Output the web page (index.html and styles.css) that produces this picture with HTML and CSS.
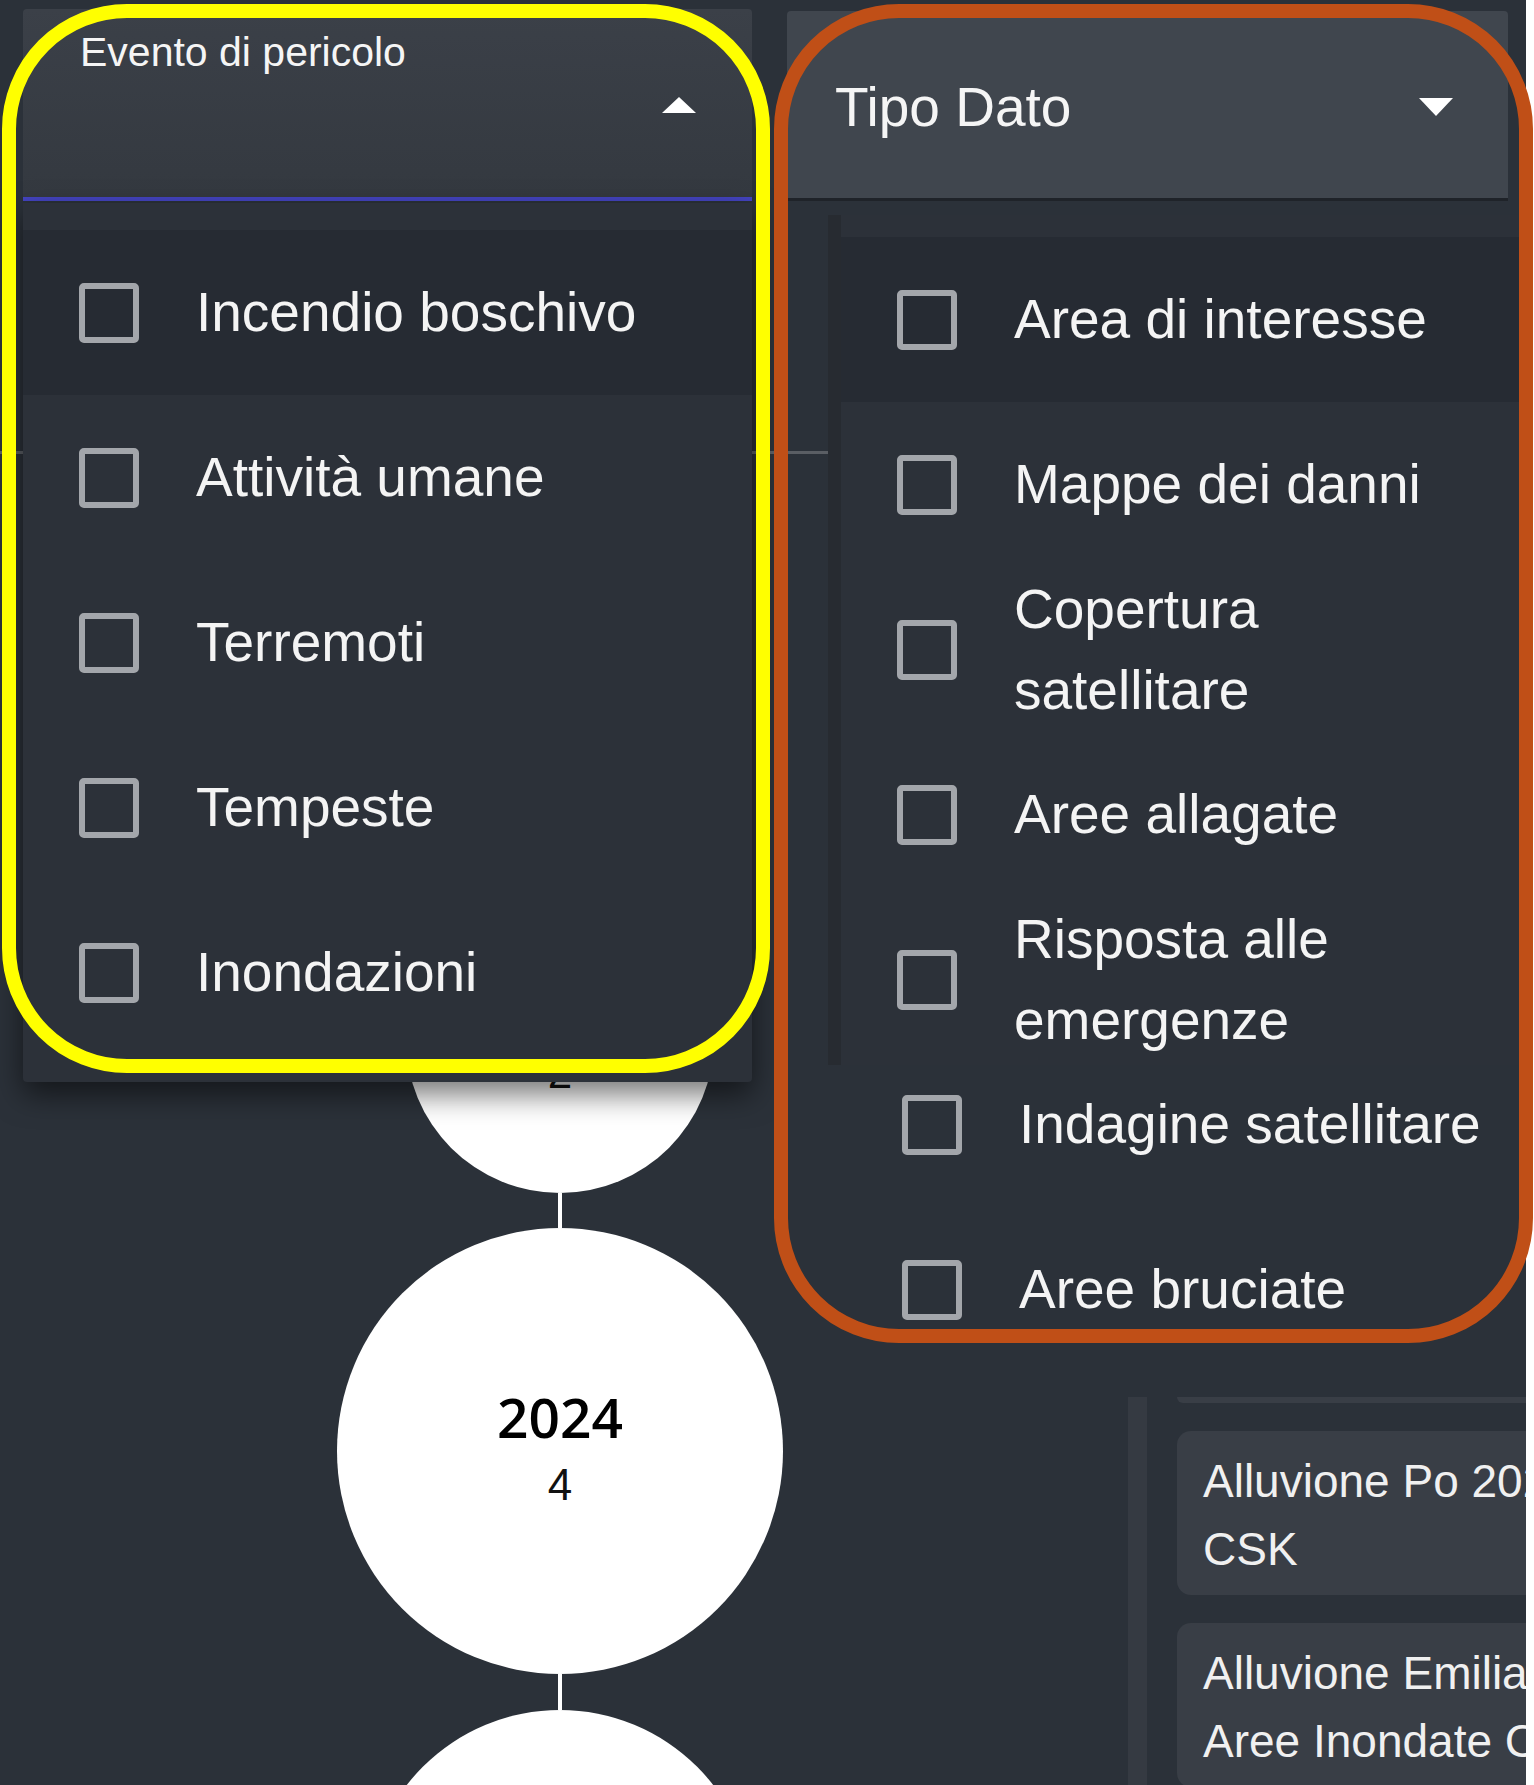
FILE: index.html
```html
<!DOCTYPE html>
<html lang="it">
<head>
<meta charset="utf-8">
<title>Filtri eventi</title>
<link rel="stylesheet" href="styles.css">
</head>
<body>
<div class="page">
  <div class="app">
    <div class="filters">
      <div class="select select-left">
        <div class="select-head head-open">
          <span class="select-label">Evento di pericolo</span>
          <svg class="caret caret-up" width="34" height="16" viewBox="0 0 34 16"><polygon points="0,16 17,0 34,16" fill="#ffffff"/></svg>
        </div>
        <div class="menu menu-left">
          <ul class="options">
            <li class="option active"><span class="check"></span><span class="opt-text">Incendio boschivo</span></li>
            <li class="option"><span class="check"></span><span class="opt-text">Attività umane</span></li>
            <li class="option"><span class="check"></span><span class="opt-text">Terremoti</span></li>
            <li class="option"><span class="check"></span><span class="opt-text">Tempeste</span></li>
            <li class="option"><span class="check"></span><span class="opt-text">Inondazioni</span></li>
          </ul>
        </div>
      </div>
      <div class="select select-right">
        <div class="select-head head-closed">
          <span class="select-value">Tipo Dato</span>
          <svg class="caret caret-down" width="34" height="18" viewBox="0 0 34 18"><polygon points="0,0 34,0 17,18" fill="#ffffff"/></svg>
        </div>
        <div class="menu menu-right">
          <ul class="options menu-box">
            <li class="option active"><span class="check"></span><span class="opt-text">Area di interesse</span></li>
            <li class="option"><span class="check"></span><span class="opt-text">Mappe dei danni</span></li>
            <li class="option"><span class="check"></span><span class="opt-text">Copertura satellitare</span></li>
            <li class="option"><span class="check"></span><span class="opt-text">Aree allagate</span></li>
            <li class="option"><span class="check"></span><span class="opt-text">Risposta alle emergenze</span></li>
          </ul>
          <ul class="options menu-more">
            <li class="option"><span class="check"></span><span class="opt-text">Indagine satellitare</span></li>
            <li class="option"><span class="check"></span><span class="opt-text">Aree bruciate</span></li>
          </ul>
        </div>
      </div>
    </div>
    <hr class="divider">
    <div class="content">
      <div class="timeline">
        <div class="node node-sm"><span class="year">2023</span><span class="count">2</span></div>
        <div class="link"></div>
        <div class="node node-lg"><span class="year">2024</span><span class="count">4</span></div>
        <div class="link link-b"></div>
        <div class="node node-md"></div>
      </div>
      <div class="cards">
        <div class="card card-sliver"></div>
        <div class="card"><span class="card-line">Alluvione Po 2024</span><span class="card-line">CSK</span></div>
        <div class="card"><span class="card-line">Alluvione Emilia-Romagna</span><span class="card-line">Aree Inondate CSK</span></div>
      </div>
    </div>
  </div>
  <div class="note note-yellow"></div>
  <div class="note note-orange"></div>
</div>
</body>
</html>
```

FILE: styles.css
```css
* {
  box-sizing: border-box;
  margin: 0;
  padding: 0;
}

html,
body {
  background: #ffffff;
}

body {
  font-family: "Liberation Sans", Arial, sans-serif;
  color: #f3f3f3;
}

.page {
  position: relative;
  width: 1534px;
  height: 1785px;
  overflow: hidden;
}

.app {
  position: relative;
  z-index: 0;
  width: 1526px;
  height: 1785px;
  background: #2b3139;
  overflow: hidden;
}

/* ---------- filters ---------- */
.filters {
  position: relative;
  z-index: 2;
  display: flex;
  align-items: flex-start;
  gap: 35px;
  height: 201px;
  padding: 9px 0 0 23px;
}

.select {
  position: relative;
}

.select-left {
  width: 729px;
}

.select-right {
  width: 721px;
  margin-top: 2px;
}

.select-head {
  display: flex;
  justify-content: space-between;
  align-items: center;
  border-radius: 4px 4px 0 0;
}

.head-open {
  height: 192px;
  padding: 0 56px 0 57px;
  background: linear-gradient(#3b4048, #343940);
  border-bottom: 4px solid #4444c0;
}

.select-label {
  align-self: flex-start;
  margin-top: 20px;
  font-size: 41px;
  color: #f5f5f5;
}

.caret {
  flex: none;
  display: block;
}

.caret-up {
  margin-top: 4px;
}

.head-closed {
  height: 190px;
  padding: 4px 55px 0 48px;
  background: #40464e;
  border-bottom: 3px solid #1f2329;
}

.select-value {
  font-size: 55px;
  color: #f5f5f5;
}

/* ---------- menus ---------- */
.menu {
  position: absolute;
}

.options {
  list-style: none;
}

.menu-left {
  top: 194px;
  left: 0;
  width: 729px;
  padding: 27px 0;
  background: #2c3139;
  border-radius: 0 0 4px 4px;
  box-shadow: 0 12px 30px rgba(0, 0, 0, 0.55);
}

.menu-right {
  top: 204px;
  left: 41px;
  width: 760px;
}

.menu-box {
  height: 850px;
  padding-top: 22px;
  background: #2c3139;
  border-left: 13px solid #272b31;
}

.menu-more {
  margin-top: -23px;
  padding-left: 18px;
}

.option {
  display: flex;
  align-items: center;
  gap: 57px;
  height: 165px;
  padding-left: 56px;
  font-size: 55px;
  line-height: 81px;
  color: #f4f4f4;
}

.option.active {
  background: #262b33;
}

.check {
  flex: none;
  width: 60px;
  height: 60px;
  border: 6px solid #a3a6ab;
  border-radius: 5px;
}

.menu-right .opt-text {
  max-width: 480px;
}

/* ---------- divider ---------- */
.divider {
  height: 3px;
  margin-top: 250px;
  border: 0;
  background: #5a5e64;
}

/* ---------- content ---------- */
.content {
  display: grid;
  grid-template-columns: 1120px 1fr;
  column-gap: 8px;
  align-items: start;
}

.timeline {
  display: flex;
  flex-direction: column;
  align-items: center;
  padding-top: 431px;
}

.node {
  flex: none;
  display: flex;
  flex-direction: column;
  align-items: center;
  justify-content: center;
  border-radius: 50%;
  background: #ffffff;
  color: #000000;
}

.node-sm {
  width: 308px;
  height: 308px;
}

.node-lg {
  width: 446px;
  height: 446px;
}

.node-md {
  width: 388px;
  height: 388px;
}

.year {
  font-family: "Open Sans", "Liberation Sans", sans-serif;
  font-size: 55px;
  font-weight: 600;
  line-height: 60px;
}

.count {
  margin-top: 8px;
  font-size: 44px;
  line-height: 60px;
  color: #111111;
}

.link {
  flex: none;
  width: 4px;
  height: 35px;
  background: #ffffff;
}

.link-b {
  height: 36px;
}

.cards {
  display: flex;
  flex-direction: column;
  gap: 28px;
  margin-top: 943px;
  padding-left: 30px;
  border-left: 19px solid #353a42;
  min-height: 420px;
}

.card {
  display: flex;
  flex-direction: column;
  width: 480px;
  padding: 16px 26px 12px;
  background: #393e46;
  border-radius: 14px;
  font-size: 46px;
  line-height: 68px;
  white-space: nowrap;
  color: #f0f0f0;
}

.card-sliver {
  height: 6px;
  padding: 0;
  border-radius: 0 0 14px 14px;
}

/* ---------- annotation outlines ---------- */
.note {
  position: absolute;
  z-index: 1;
  border-style: solid;
  border-width: 14px;
  border-radius: 125px;
  pointer-events: none;
}

.note-yellow {
  left: 2px;
  top: 4px;
  width: 768px;
  height: 1069px;
  border-color: #ffff00;
}

.note-orange {
  left: 774px;
  top: 4px;
  width: 759px;
  height: 1339px;
  border-color: #c04f17;
}
```
